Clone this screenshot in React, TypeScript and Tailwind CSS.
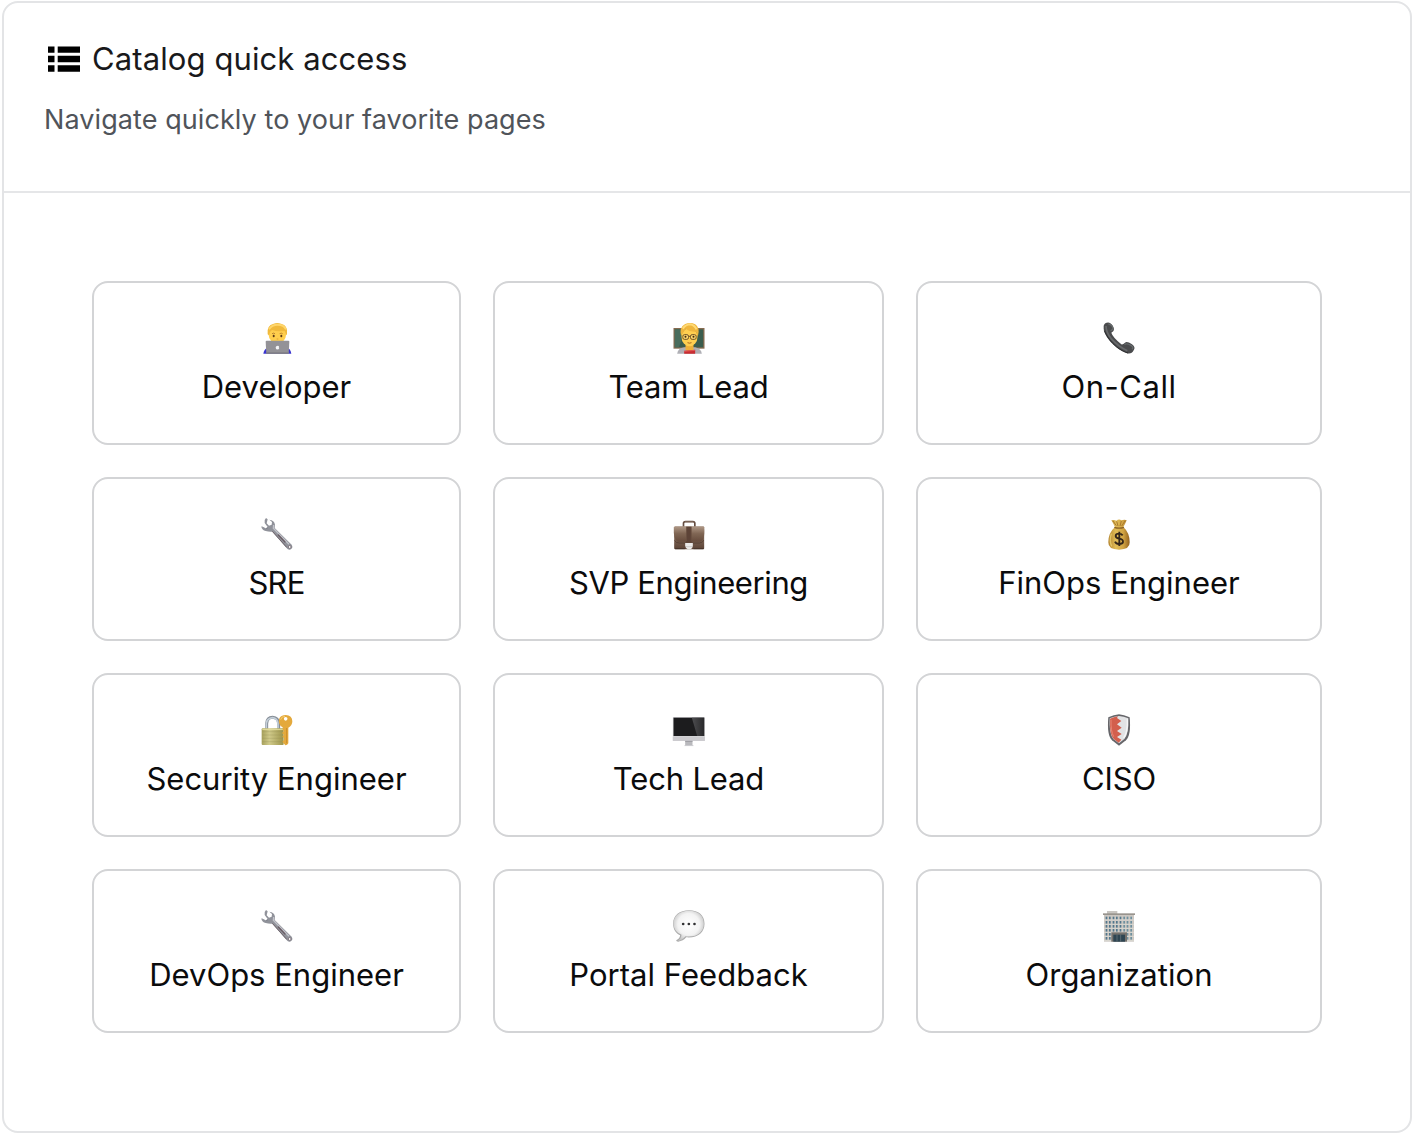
import React from "react";

const Developer = () => (
  <>
    <path d="M41 131 Q43 118 53 114 H114 Q123 118 125 131Z" fill="#3934cf" />
    <ellipse cx="83" cy="75" rx="26" ry="25" fill="#ffce4d" />
    <path d="M54 73 Q50 46 72 41 Q82 37 94 41 Q116 46 112 73 L109 76 L105 63 Q82 66 67 60 L61 66 L58 76Z" fill="#f0b93c" />
    <path d="M58 58 Q66 44 84 44 Q103 44 109 58" fill="none" stroke="#ffd66b" strokeWidth="6" />
    <path d="M67 71 q5 -3 9 0 M90 71 q5 -3 9 0" stroke="#b57a2a" strokeWidth="2.5" fill="none" />
    <ellipse cx="72" cy="78" rx="3" ry="4" fill="#5c3a18" />
    <ellipse cx="95" cy="78" rx="3" ry="4" fill="#5c3a18" />
    <path d="M81 87 h5" stroke="#d18f2c" strokeWidth="2" />
    <path d="M51 92 H116 Q119 92 119 95 L117 131 H50 L48 95 Q48 92 51 92Z" fill="#939297" />
    <path d="M50 127 H117 V131 H50Z" fill="#7d7c82" />
    <path d="M82 108 q4 -2 6 1 q-2 3 1 5 q-3 6 -6 4 q-4 1 -5 -5 q0 -5 4 -5Z" fill="#f5f5f7" />
  </>
);

const Teacher = () => (
  <>
    <rect x="41" y="54" width="93" height="62" fill="#866b50" />
    <rect x="45" y="58" width="85" height="54" fill="#3b5d4e" />
    <path d="M45 58 H77 L57 112 H45Z" fill="#496c5c" />
    <path d="M52 131 Q54 115 73 112 H106 Q124 116 126 131Z" fill="#b0b0b6" />
    <path d="M77 103 H101 V120 L89 126 L77 120Z" fill="#efb03a" />
    <ellipse cx="89" cy="81" rx="24" ry="28" fill="#ffcf50" />
    <path d="M64 78 Q57 52 76 42 Q92 35 106 43 Q122 53 114 80 L108 65 Q91 67 77 56 Q72 67 67 71Z" fill="#efb63d" />
    <path d="M69 56 Q77 44 91 43 Q104 45 110 58" stroke="#ffda75" strokeWidth="6" fill="none" />
    <g fill="#ffe58c" fillOpacity=".5" stroke="#6d5026" strokeWidth="3">
      <rect x="69" y="74" width="17" height="14" rx="5" />
      <rect x="92" y="74" width="17" height="14" rx="5" />
      <path d="M86 79 h6" />
    </g>
    <circle cx="77" cy="80" r="3" fill="#40270d" />
    <circle cx="101" cy="80" r="3" fill="#40270d" />
    <path d="M83 98 q6 3 12 0" stroke="#985217" strokeWidth="2.5" fill="none" />
    <path d="M73 122 L106 119 V131 H73Z" fill="#c92c32" />
    <path d="M73 124 L106 121" stroke="#ed6965" strokeWidth="2" />
  </>
);

const Phone = () => (
  <>
    <path d="M41 47 Q45 36 58 38 Q69 43 72 57 Q73 63 64 68 Q67 80 94 103 Q98 105 105 98 Q111 93 126 103 Q138 112 131 121 Q125 133 112 130 Q85 122 60 94 Q38 67 41 47Z" fill="#4a4b4d" />
    <path d="M48 48 Q48 66 63 85 Q84 109 112 122" fill="none" stroke="#737678" strokeWidth="5" opacity=".7" />
    <path d="M55 42 Q67 43 69 57 L62 63 M103 103 Q110 99 123 106 Q132 112 126 118" fill="none" stroke="#666a6c" strokeWidth="4" />
    <path d="M43 62 Q55 90 80 111 Q102 127 114 129" fill="none" stroke="#2c2d2f" strokeWidth="3" />
  </>
);

const Wrench = () => (
  <>
    <path d="M49 36 L54 40 L51 52 L58 59 L66 56 L67 48 L59 41 Q74 42 76 56 L75 66 L126 116 Q132 126 121 131 Q115 132 110 125 L68 77 Q58 78 48 75 Q37 72 35 62 L48 68 L54 63 L45 51 Q43 41 49 36Z" fill="#90929a" />
    <path d="M36 62 L48 68 L55 65" fill="none" stroke="#6d707a" strokeWidth="2" />
    <path d="M72 57 L71 67 L118 115" fill="none" stroke="#c2c3ca" strokeWidth="4" />
    <path d="M68 76 L111 124" stroke="#71656c" strokeWidth="3" />
    <path d="M86 87 L106 108" stroke="#695c64" strokeWidth="4" strokeLinecap="round" />
    <circle cx="120" cy="123" r="4" fill="#fff" stroke="#706169" strokeWidth="2" />
  </>
);

const Briefcase = () => (
  <>
    <path d="M71 62 V52 Q71 47 77 47 H99 Q105 47 105 52 V62" stroke="#644c40" strokeWidth="5" fill="none" />
    <path d="M75 48 H101" stroke="#a89282" strokeWidth="2" />
    <rect x="43" y="61" width="90" height="69" rx="3" fill="url(#leather)" />
    <path d="M42 63 Q40 103 54 107 H121 Q136 105 133 63Z" fill="url(#flap)" />
    <path d="M44 103 Q48 111 58 111 H119 Q129 110 132 102" stroke="#4d362c" strokeWidth="2" fill="none" />
    <rect x="79" y="62" width="16" height="48" fill="#5d4337" />
    <path d="M80 63 V105 M94 63 V105" stroke="#7d6252" />
    <path d="M76 111 H99 V119 Q98 129 90 130 H84 Q77 128 76 119Z" fill="#ebe9e8" />
    <path d="M78 122 H97" stroke="#c0bcb9" strokeWidth="2" />
    <path d="M46 128 H75 M101 128 H131" stroke="#45342b" strokeWidth="3" />
  </>
);

const MoneyBag = () => (
  <>
    <path d="M75 63 Q70 52 64 43 Q73 40 79 44 Q87 38 94 43 Q104 40 110 43 Q105 55 100 63 Q119 80 119 109 Q120 131 87 131 Q54 131 55 109 Q55 80 75 63Z" fill="url(#gold)" />
    <path d="M69 45 L79 59 M80 46 L84 60 M94 45 L90 60 M105 45 L95 60" stroke="#a9792f" strokeWidth="3" />
    <path d="M73 64 Q87 69 102 64" stroke="#8a6227" strokeWidth="4" fill="none" />
    <path d="M64 83 Q57 105 65 121" stroke="#f1da78" strokeWidth="4" fill="none" opacity=".7" />
    <path d="M98 88 Q94 83 87 83 Q77 83 77 90 Q77 96 87 98 Q100 100 99 108 Q98 114 87 114 Q78 114 75 107 M88 77 V120" fill="none" stroke="#332619" strokeWidth="5.5" />
  </>
);

const Lock = () => (
  <>
    <path d="M51 81 V65 Q52 46 69 46 Q86 47 87 65 V81" fill="none" stroke="#858d96" strokeWidth="9" />
    <path d="M50 80 V64 Q52 49 69 47 Q83 49 85 65 V80" fill="none" stroke="#c3ced8" strokeWidth="5" />
    <rect x="36" y="79" width="66" height="50" rx="3" fill="url(#lockGold)" />
    <path d="M38 89 H100 M38 99 H100 M38 109 H100 M38 119 H100" stroke="#8f8950" strokeWidth="2" opacity=".4" />
    <path d="M38 82 H100" stroke="#e5dfa1" strokeWidth="3" />
    <path fillRule="evenodd" d="M108 39 C91 39 85 51 89 65 Q91 72 99 76 V84 L103 87 L97 93 L103 98 L98 104 L103 108 V114 L98 119 L107 130 Q113 130 116 124 V77 Q128 71 128 58 Q128 40 108 39Z M108 45 a5.5 5.5 0 1 1 0 11 a5.5 5.5 0 1 1 0 -11Z" fill="#e4a93c" />
    <path d="M111 78 V124" stroke="#ca8c2d" strokeWidth="3" />
    <path d="M93 53 Q95 43 106 43" stroke="#f8cd70" strokeWidth="3" fill="none" />
  </>
);

const Monitor = () => (
  <>
    <rect x="39" y="45" width="96" height="72" rx="2" fill="#d5d4d7" />
    <rect x="41" y="47" width="92" height="55" fill="#1c1c1e" />
    <path d="M96 47 H133 V102 H112Z" fill="url(#glass)" />
    <rect x="39" y="104" width="96" height="13" rx="1" fill="#cccbcf" />
    <path d="M76 117 H98 V129 L101 132 H74 L76 129Z" fill="#b9b9bd" />
    <path d="M76 118 H98" stroke="#9c9ca1" strokeWidth="3" />
    <path d="M74 131 H101" stroke="#d9d9dc" strokeWidth="2" />
  </>
);

const Shield = () => (
  <>
    <path d="M87 37 Q101 38 119 46 Q124 99 108 115 L87 131 L66 115 Q50 99 55 46 Q72 38 87 37Z" fill="#66666a" />
    <path d="M87 42 Q101 43 115 49 Q117 95 103 111 L87 124 L70 111 Q57 95 59 49 Q73 43 87 42Z" fill="#e2e3e5" />
    <path d="M84 43 Q71 45 60 50 Q58 96 71 111 L86 122 L94 113 L81 105 L95 96 L81 87 L95 77 L81 67 L94 57 L81 48Z" fill="#d35f4d" />
    <path d="M63 53 Q62 88 71 104" stroke="#e98876" strokeWidth="3" fill="none" />
    <path d="M112 52 Q114 91 101 108" stroke="#f7f7f8" strokeWidth="4" fill="none" />
  </>
);

const Speech = () => (
  <>
    <path d="M88 37 C59 37 40 52 40 77 C40 94 48 106 61 112 Q60 122 49 127 Q49 131 55 131 Q70 129 79 118 C113 121 134 103 134 77 C134 52 116 37 88 37Z" fill="#aaa" />
    <path d="M88 38 C60 38 41 53 41 76 C41 94 51 105 65 110 Q64 122 53 129 Q68 127 77 115 C111 119 132 102 132 77 C132 53 115 38 88 38Z" fill="url(#bubble)" />
    <circle cx="70" cy="78" r="4" fill="#303032" />
    <circle cx="87" cy="78" r="4" fill="#303032" />
    <circle cx="104" cy="78" r="4" fill="#303032" />
  </>
);

const Building = () => (
  <>
    <rect x="51" y="39" width="31" height="9" fill="#c8c5c1" />
    <rect x="42" y="49" width="90" height="82" fill="#cbc7c2" />
    <path d="M39 46 H135 V51 H39Z" fill="#98948e" />
    {[56, 69, 81, 93, 105, 117].map((y) => (
      <g key={y}>
        {[47, 57, 68, 78, 89, 100, 110, 121].map((x) => (
          <rect key={x} x={x} y={y} width="5" height="8" fill={x < 100 ? "#52778c" : "#6d909f"} />
        ))}
        <path d={`M42 ${y + 10} H132`} stroke="#e2dfda" strokeWidth="2" />
      </g>
    ))}
    <rect x="64" y="103" width="47" height="28" fill="#74716d" />
    <rect x="70" y="110" width="35" height="21" fill="#2e4552" />
    <path d="M81 110 V131 M92 110 V131" stroke="#6f7d84" strokeWidth="2" />
  </>
);

const items = [
  { label: "Developer", Icon: Developer, tracking: "tracking-[0px]" },
  { label: "Team Lead", Icon: Teacher, tracking: "tracking-[-0.15px]" },
  { label: "On-Call", Icon: Phone, tracking: "tracking-[0.5px]" },
  { label: "SRE", Icon: Wrench, tracking: "tracking-[-0.8px]" },
  { label: "SVP Engineering", Icon: Briefcase, tracking: "tracking-[-0.38px]" },
  { label: "FinOps Engineer", Icon: MoneyBag, tracking: "tracking-[0px]" },
  { label: "Security Engineer", Icon: Lock, tracking: "tracking-[0px]" },
  { label: "Tech Lead", Icon: Monitor, tracking: "tracking-[-0.15px]" },
  { label: "CISO", Icon: Shield, tracking: "tracking-[-0.15px]" },
  { label: "DevOps Engineer", Icon: Wrench, tracking: "tracking-[0px]" },
  { label: "Portal Feedback", Icon: Speech, tracking: "tracking-[0.04px]" },
  { label: "Organization", Icon: Building, tracking: "tracking-[0.08px]" },
];

const viewBoxes = ["22 24 120 120", "27.5 24 120 120", "27 24 120 120"];

function Gradients() {
  return (
    <svg className="h-0 w-0 shrink-0" aria-hidden="true">
      <defs>
        <linearGradient id="leather" x2="0" y2="1"><stop stopColor="#a38b7a" /><stop offset="1" stopColor="#5b4235" /></linearGradient>
        <linearGradient id="flap" x2="0" y2="1"><stop stopColor="#ab9482" /><stop offset=".45" stopColor="#806654" /><stop offset="1" stopColor="#664b3c" /></linearGradient>
        <linearGradient id="gold"><stop stopColor="#b3832f" /><stop offset=".35" stopColor="#e1bd57" /><stop offset=".7" stopColor="#d1a443" /><stop offset="1" stopColor="#93621f" /></linearGradient>
        <linearGradient id="lockGold"><stop stopColor="#a7a15c" /><stop offset=".35" stopColor="#d0ca8a" /><stop offset="1" stopColor="#9d954b" /></linearGradient>
        <linearGradient id="glass"><stop stopColor="#4d4d50" /><stop offset="1" stopColor="#29292b" /></linearGradient>
        <radialGradient id="bubble" cx=".5" cy=".45" r=".55"><stop stopColor="#fff" /><stop offset=".65" stopColor="#f3f3f3" /><stop offset="1" stopColor="#c4c4c4" /></radialGradient>
      </defs>
    </svg>
  );
}

export default function App() {
  return (
    <div className="h-[1136px] w-[1414px] bg-white pt-px pl-0.5 font-['Inter',sans-serif]">
      <main className="h-[1132px] w-[1410px] rounded-[16px] border-2 border-[#e3e4e6]">
        <header className="h-[190px] border-b-2 border-[#e5e6e8] px-10 pt-9">
          <div className="flex h-10 items-center gap-3 pl-1">
            <svg className="size-8" viewBox="0 0 32 32" fill="#000" aria-hidden="true">
              <path d="M0 3.5h6.5v6.3H0zM9.7 3.5H32v6.3H9.7zM0 12.8h6.5v6.4H0zM9.7 12.8H32v6.4H9.7zM0 22.3h6.5v6.4H0zM9.7 22.3H32v6.4H9.7z" />
            </svg>
            <h1 className="whitespace-nowrap text-[31px] leading-10 tracking-[0.1px] text-[#19191b]">Catalog quick access</h1>
          </div>
          <p className="mt-[21px] whitespace-nowrap text-[27px] leading-10 tracking-[0.08px] text-[#50545a]">Navigate quickly to your favorite pages</p>
        </header>
        <section className="grid grid-cols-[369px_391px_406px] gap-8 pt-[88px] pl-[88px]">
          {items.map(({ label, Icon, tracking }, index) => (
            <button key={label} className="flex h-[164px] flex-col items-center rounded-[16px] border-2 border-[#d3d4d6] bg-white pt-[35px]">
              <svg className="size-10 shrink-0" viewBox={viewBoxes[index % 3]} aria-hidden="true"><Icon /></svg>
              <span className={`mt-[9px] whitespace-nowrap text-[31px] leading-10 text-[#0b0b0c] ${tracking}`}>{label}</span>
            </button>
          ))}
        </section>
        <Gradients />
      </main>
    </div>
  );
}
